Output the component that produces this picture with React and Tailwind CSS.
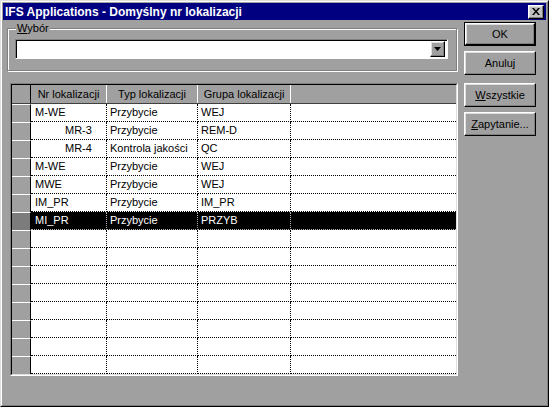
import React from 'react'

const rows = [
  { nr: 'M-WE', typ: 'Przybycie', grupa: 'WEJ' },
  { nr: 'MR-3', typ: 'Przybycie', grupa: 'REM-D', indent: true },
  { nr: 'MR-4', typ: 'Kontrola jakości', grupa: 'QC', indent: true },
  { nr: 'M-WE', typ: 'Przybycie', grupa: 'WEJ' },
  { nr: 'MWE', typ: 'Przybycie', grupa: 'WEJ' },
  { nr: 'IM_PR', typ: 'Przybycie', grupa: 'IM_PR' },
  { nr: 'MI_PR', typ: 'Przybycie', grupa: 'PRZYB', selected: true },
  {}, {}, {}, {}, {}, {}, {}, {},
]

const raised =
  'border border-t-white border-l-white border-r-black border-b-black shadow-[inset_-1px_-1px_0_#808080,inset_1px_1px_0_#dfdfdf] bg-[#a0a0a0]'

function Button({ children, className = '' }) {
  return (
    <div className={`flex h-[24px] w-[72px] items-center justify-center ${raised} ${className}`}>
      {children}
    </div>
  )
}

function Row({ row }) {
  const sel = row.selected
  const cell = sel
    ? 'border-b border-r border-dotted border-white/70 bg-black text-white'
    : 'border-b border-r border-dotted border-black bg-white text-black'
  return (
    <div className="flex h-[18px]">
      <div
        className={`w-[19px] shrink-0 border-t border-r border-t-white border-r-black ${
          sel ? 'bg-[#7c7c7c]' : 'bg-[#a0a0a0]'
        }`}
      />
      <div className={`w-[76px] shrink-0 truncate leading-[17px] ${row.indent ? 'pl-[34px]' : 'pl-[4px]'} ${cell}`}>
        {row.nr}
      </div>
      <div className={`w-[91px] shrink-0 truncate pl-[3px] leading-[17px] ${cell}`}>{row.typ}</div>
      <div className={`w-[93px] shrink-0 truncate pl-[3px] leading-[17px] ${cell}`}>{row.grupa}</div>
      <div
        className={`flex-1 border-b border-dotted leading-[17px] ${
          sel ? 'border-white/70 bg-black' : 'border-black bg-white'
        }`}
      />
    </div>
  )
}

export default function App() {
  return (
    <div className="h-[407px] w-[549px] border border-t-[#dfdfdf] border-l-[#dfdfdf] border-r-black border-b-black bg-[#a0a0a0] font-['Liberation_Sans',Arial,sans-serif] text-[11px] text-black">
      <div className="h-full w-full border border-t-white border-l-white border-r-[#808080] border-b-[#808080] p-[1px]">
        {/* title bar */}
        <div className="flex h-[17px] items-center justify-between bg-[#000080] pl-[2px] pr-[2px]">
          <span className="text-[12px] font-bold text-white">IFS Applications - Domyślny nr lokalizacji</span>
          <div className="flex h-[14px] w-[16px] items-center justify-center border border-t-white border-l-white border-r-black border-b-black bg-[#c0c0c0] shadow-[inset_-1px_-1px_0_#808080,inset_1px_1px_0_#dfdfdf]">
            <svg width="8" height="7" viewBox="0 0 8 7">
              <path d="M0 0h2l2 2.5L6 0h2L5 3.5 8 7H6L4 4.5 2 7H0l3-3.5z" fill="#000" />
            </svg>
          </div>
        </div>

        <div className="flex">
          {/* left column */}
          <div className="flex w-[454px] shrink-0 flex-col">
            <div className="relative ml-[4px] mt-[8px] h-[43px] w-[450px] border border-[#808080] pl-[7px] pt-[10px] shadow-[inset_1px_1px_0_#fff,1px_1px_0_#fff]">
              <span className="absolute -top-[7px] left-[8px] bg-[#a0a0a0] px-[1px] leading-[13px]">
                <span className="underline">W</span>ybór
              </span>
              <div className="relative h-[20px] w-[433px] border border-t-[#808080] border-l-[#808080] border-b-white border-r-white bg-white shadow-[inset_1px_1px_0_#000]">
                <div className={`absolute right-[2px] top-[1px] flex h-[16px] w-[15px] items-center justify-center ${raised}`}>
                  <svg width="7" height="4" viewBox="0 0 7 4">
                    <path d="M0 0h7L3.5 4z" fill="#000" />
                  </svg>
                </div>
              </div>
            </div>

            {/* grid */}
            <div className="ml-[7px] mt-[12px] w-[448px] border border-t-[#808080] border-l-[#808080] border-b-white border-r-white">
              <div className="border border-t-black border-l-black border-b-[#dfdfdf] border-r-[#dfdfdf]">
                <div className="flex h-[19px] border-b border-b-[#404040] bg-[#a0a0a0]">
                  <div className="w-[19px] shrink-0 border-r border-r-black" />
                  <div className="w-[76px] shrink-0 border-r border-r-white text-center leading-[18px]">Nr lokalizacji</div>
                  <div className="w-[91px] shrink-0 border-r border-r-white text-center leading-[18px]">Typ lokalizacji</div>
                  <div className="w-[93px] shrink-0 border-r border-r-white text-center leading-[18px]">Grupa lokalizacji</div>
                  <div className="flex-1" />
                </div>
                {rows.map((r, i) => (
                  <Row key={i} row={r} />
                ))}
              </div>
            </div>
          </div>

          {/* right column */}
          <div className="ml-[7px] flex w-[72px] flex-col">
            <div className="mt-[2px] flex h-[24px] w-[72px] border border-black">
              <div className={`flex flex-1 items-center justify-center ${raised}`}>OK</div>
            </div>
            <Button className="mt-[5px]">Anuluj</Button>
            <Button className="mt-[8px]">
              <span>
                <span className="underline">W</span>szystkie
              </span>
            </Button>
            <Button className="mt-[5px]">
              <span>
                <span className="underline">Z</span>apytanie...
              </span>
            </Button>
          </div>
        </div>
      </div>
    </div>
  )
}
